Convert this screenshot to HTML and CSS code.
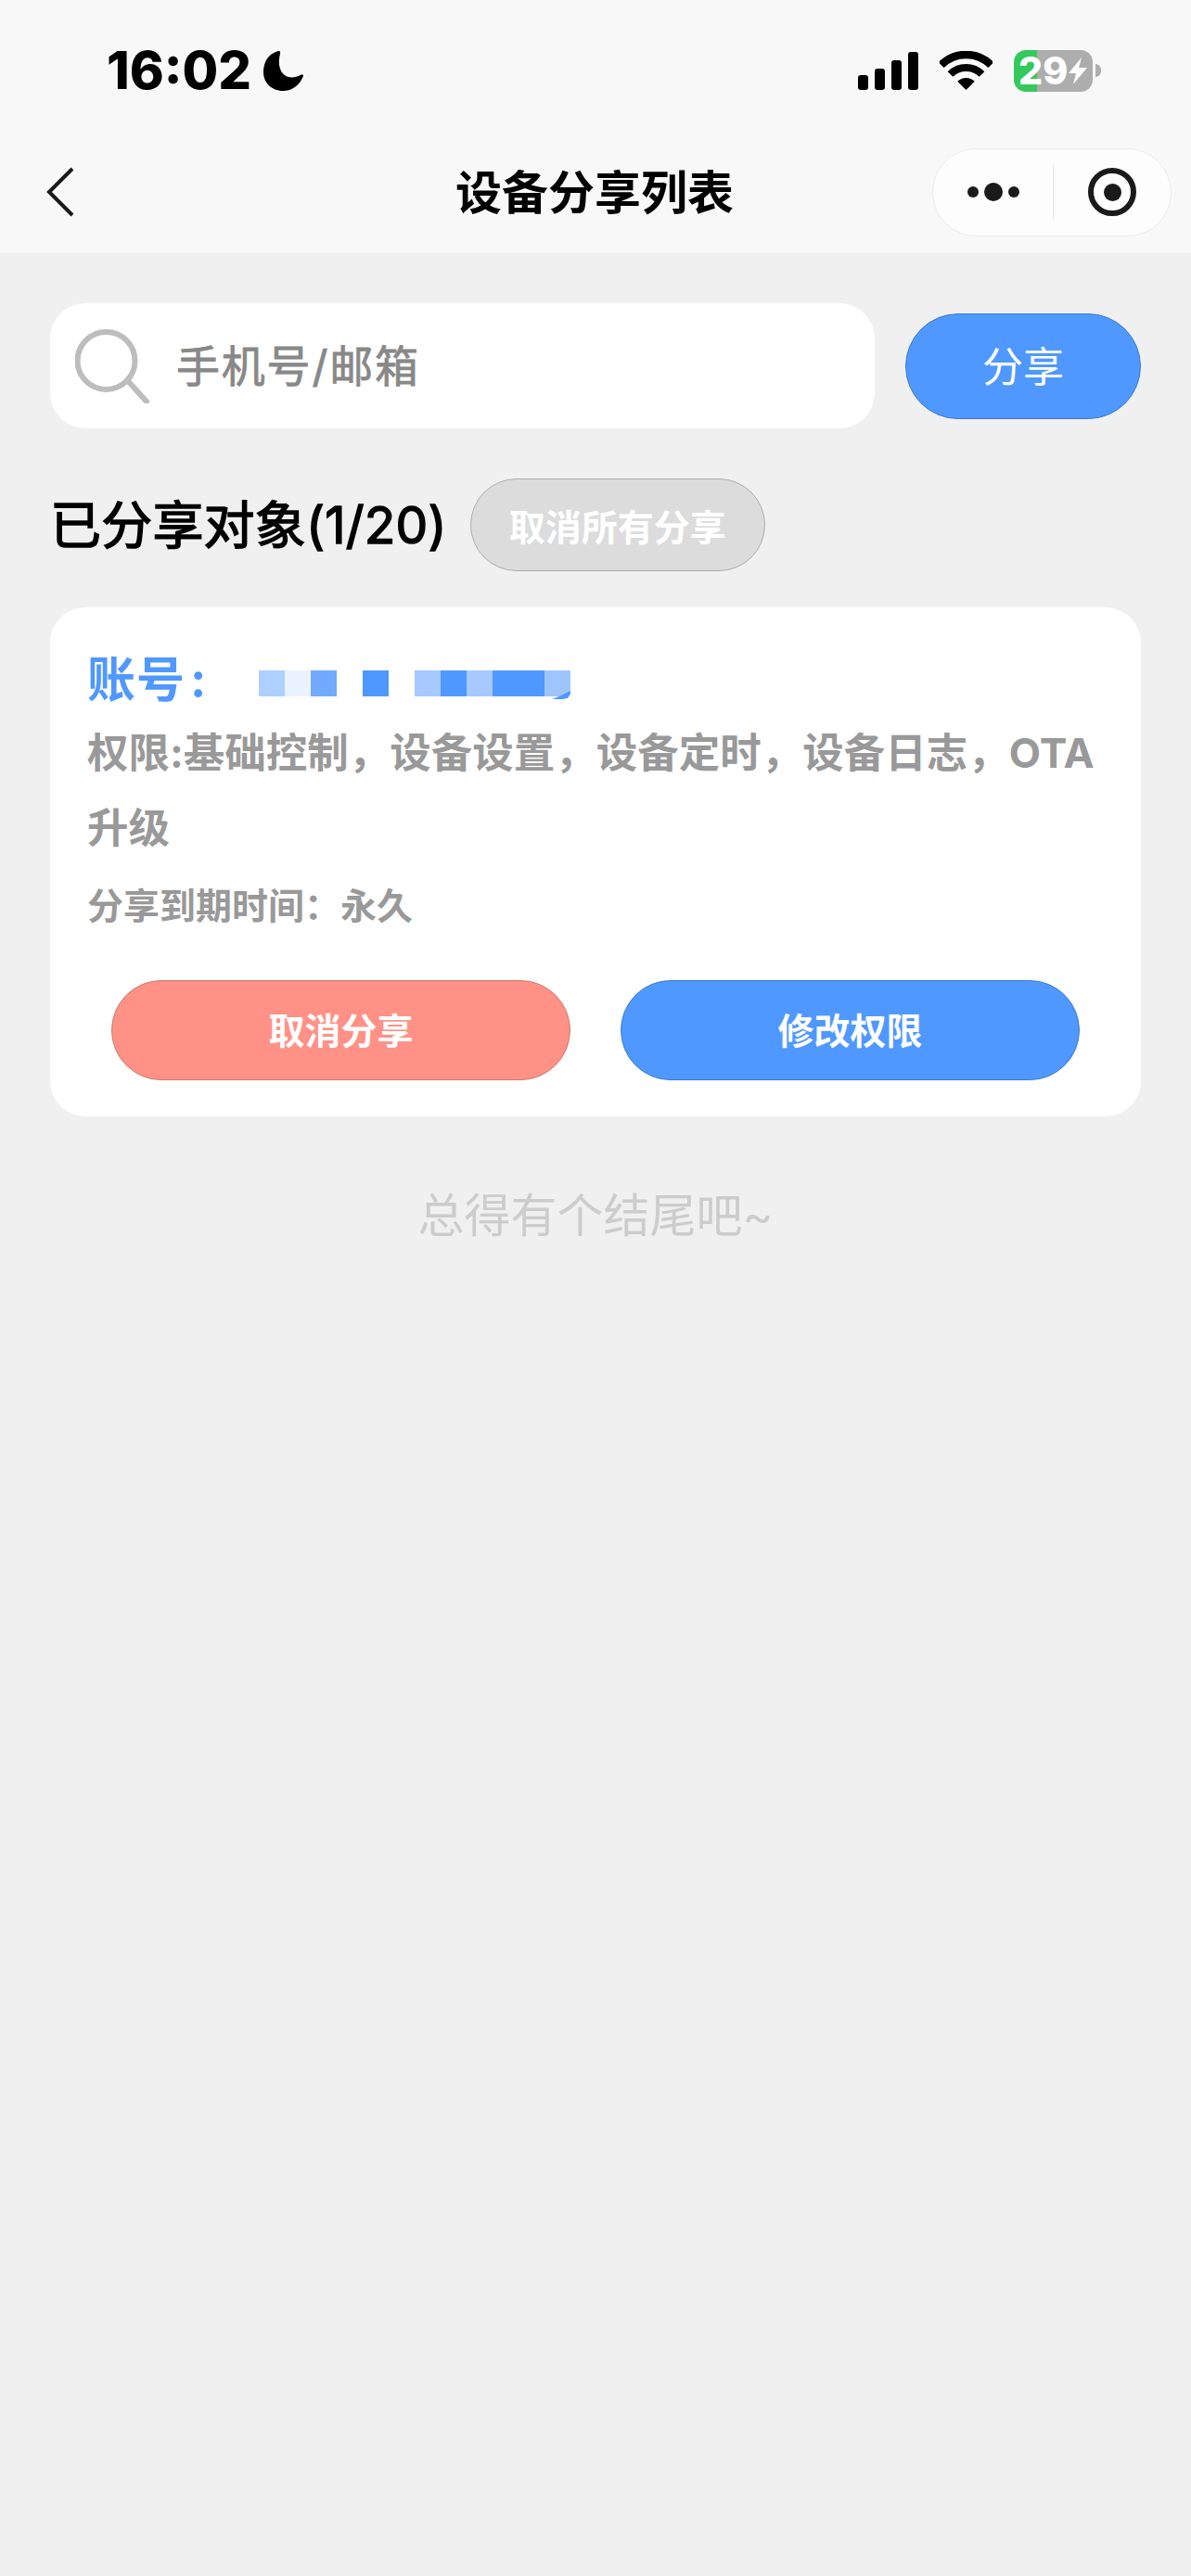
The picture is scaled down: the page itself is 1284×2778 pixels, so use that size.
FILE: index.html
```html
<!DOCTYPE html>
<html lang="zh-CN">
<head>
    <meta charset="UTF-8">
    <meta name="viewport" content="width=device-width, initial-scale=1.0">
    <title>设备分享列表</title>
    <link rel="stylesheet" href="styles.css">
</head>
<body>
    <header class="top">
        <div class="status">
            <div class="status-left">
                <span class="time">16:02</span>
                <svg class="moon" width="43" height="43" viewBox="0 0 43 43"><path d="M16 0C5 3 0 12 0 23C0 34 9 43 21 43C31 43 39 37 43 27C43 25 41 25 40 26C36 28 31 29 27 28C19 26 16 17 17 8C17.5 5 18.5 2 18 1C18 0 17 0 16 0Z"/></svg>
            </div>
            <div class="status-right">
                <div class="signal">
                    <span class="bar bar-1"></span>
                    <span class="bar bar-2"></span>
                    <span class="bar bar-3"></span>
                    <span class="bar bar-4"></span>
                </div>
                <svg class="wifi" width="57" height="42" viewBox="0 0 57 42">
                    <path d="M1.6 15.1A38 38 0 0 1 55.4 15.1" fill="none" stroke="#000" stroke-width="8.5"/>
                    <path d="M11.5 25A24 24 0 0 1 45.5 25" fill="none" stroke="#000" stroke-width="8"/>
                    <path d="M28.5 42L19.3 32.8A13 13 0 0 1 37.7 32.8Z"/>
                </svg>
                <div class="battery">
                    <span class="battery-num">29</span>
                    <svg class="bolt" width="20" height="29" viewBox="0 0 20 29"><path d="M14 0L0 17H8L5 29L20 11H11Z" fill="#fff"/></svg>
                </div>
                <span class="battery-nub"></span>
            </div>
        </div>
        <nav class="nav">
            <svg class="back" width="30" height="54" viewBox="0 0 30 54"><path d="M28 2L3 27L28 52" fill="none" stroke="#1a1a1a" stroke-width="4"/></svg>
            <h1 class="title">设备分享列表</h1>
            <div class="capsule">
                <div class="capsule-more">
                    <span class="dot"></span>
                    <span class="dot dot-big"></span>
                    <span class="dot"></span>
                </div>
                <div class="capsule-close">
                    <span class="target"><span class="target-dot"></span></span>
                </div>
            </div>
        </nav>
    </header>

    <main class="page">
        <div class="search-row">
            <div class="search">
                <svg class="search-icon" width="80" height="80" viewBox="0 0 80 80">
                    <circle cx="33.5" cy="34" r="31" fill="none" stroke="#bdbdbd" stroke-width="6"/>
                    <path d="M57 56L77 78" stroke="#bdbdbd" stroke-width="6" stroke-linecap="round"/>
                </svg>
                <span class="search-text">手机号/邮箱</span>
            </div>
            <button class="share-btn">分享</button>
        </div>

        <div class="heading-row">
            <h2 class="heading">已分享对象(1/20)</h2>
            <button class="cancel-all">取消所有分享</button>
        </div>

        <section class="card">
            <div class="account">
                <span class="account-label">账号<span class="colon">:</span></span>
                <div class="mosaic">
                    <span class="tile t1"></span>
                    <span class="tile t2"></span>
                    <span class="tile t3"></span>
                    <span class="tile"></span>
                    <span class="tile t4"></span>
                    <span class="tile"></span>
                    <span class="tile t5"></span>
                    <span class="tile t4"></span>
                    <span class="tile t5"></span>
                    <span class="tile t4"></span>
                    <span class="tile t4"></span>
                    <span class="tile t6"></span>
                </div>
            </div>
            <p class="perms">权限:基础控制，设备设置，设备定时，设备日志，OTA升级</p>
            <p class="expire">分享到期时间：永久</p>
            <div class="actions">
                <button class="action action-red">取消分享</button>
                <button class="action action-blue">修改权限</button>
            </div>
        </section>

        <p class="end">总得有个结尾吧~</p>
    </main>
</body>
</html>
```

FILE: styles.css
```css
* {
    box-sizing: border-box;
}
body {
    margin: 0;
    min-height: 100vh;
    background-color: #f0f0f0;
    font-family: Inter, "Noto Sans CJK SC", sans-serif;
    color: #000;
}
button {
    font-family: inherit;
    padding: 0;
    color: #fff;
}
h1, h2, p {
    margin: 0;
}

/* top bar */
.top {
    background-color: #f8f8f8;
}
.status {
    height: 152px;
    padding: 0 97px 0 115px;
    display: flex;
    align-items: center;
    justify-content: space-between;
}
.status-left {
    display: flex;
    align-items: center;
    gap: 13px;
}
.time {
    font-size: 56px;
    font-weight: 800;
    line-height: 1;
}
.status-right {
    display: flex;
    align-items: center;
}
.signal {
    display: flex;
    align-items: flex-end;
    gap: 7px;
    margin-right: 23px;
}
.bar {
    width: 11px;
    background: #000;
    border-radius: 3px;
}
.bar-1 { height: 16px; }
.bar-2 { height: 23px; }
.bar-3 { height: 32px; }
.bar-4 { height: 41px; }
.wifi {
    margin-right: 23px;
}
.battery {
    width: 85px;
    height: 45px;
    padding-left: 5px;
    border-radius: 13px;
    background: linear-gradient(to right, #35c95c 0, #35c95c 25px, #adadad 25px);
    display: flex;
    align-items: center;
    gap: 1px;
}
.battery-num {
    font-size: 41px;
    font-weight: 800;
    line-height: 1;
    color: #fff;
}
.battery-nub {
    width: 6px;
    height: 14px;
    margin-left: 3px;
    background: #adadad;
    border-radius: 0 7px 7px 0;
}
.nav {
    height: 121px;
    padding: 0 21px 11px;
    display: grid;
    grid-template-columns: 1fr auto 1fr;
    align-items: center;
}
.back {
    margin-left: 29px;
}
.title {
    font-size: 50px;
    font-weight: 700;
    line-height: 1.2;
    margin-left: -2px;
    padding-top: 2px;
}
.capsule {
    justify-self: end;
    width: 258px;
    height: 95px;
    background: #fdfdfd;
    border: 1px solid #ebebeb;
    border-radius: 48px;
    display: flex;
    align-items: center;
}
.capsule-more {
    width: 129px;
    display: flex;
    align-items: center;
    justify-content: center;
    gap: 6px;
}
.dot {
    width: 12px;
    height: 12px;
    border-radius: 50%;
    background: #1a1a1a;
}
.dot-big {
    width: 20px;
    height: 20px;
}
.capsule-close {
    flex: 1;
    height: 60px;
    border-left: 1px solid #e6e6e6;
    display: flex;
    align-items: center;
    justify-content: center;
}
.target {
    width: 52px;
    height: 52px;
    border: 6px solid #1a1a1a;
    border-radius: 50%;
    display: flex;
    align-items: center;
    justify-content: center;
}
.target-dot {
    width: 19px;
    height: 19px;
    border-radius: 50%;
    background: #1a1a1a;
}

/* page */
.page {
    padding: 54px 54px 0;
}
.search-row {
    display: flex;
    align-items: center;
    gap: 33px;
}
.search {
    flex: 1;
    height: 135px;
    padding-left: 27px;
    background: #fff;
    border-radius: 38px;
    display: flex;
    align-items: center;
    gap: 29px;
}
.search-text {
    font-size: 47px;
    letter-spacing: 1.8px;
    color: #888;
    line-height: 1;
    -webkit-text-stroke: 0.8px #888;
}
.share-btn {
    width: 254px;
    height: 114px;
    padding-bottom: 4px;
    background: #4f98ff;
    border: 1px solid #3f7ad0;
    border-radius: 57px;
    font-size: 44px;
}
.heading-row {
    margin-top: 54px;
    display: flex;
    align-items: center;
    gap: 25px;
}
.heading {
    font-size: 55px;
    font-weight: 400;
    letter-spacing: 0.2px;
    line-height: 1.2;
    -webkit-text-stroke: 1.5px #000;
}
.cancel-all {
    width: 318px;
    height: 100px;
    background: #dcdcdc;
    border: 1px solid #adadad;
    border-radius: 50px;
    font-size: 39px;
    font-weight: 700;
}

/* card */
.card {
    margin-top: 39px;
    padding: 44px 40px 39px;
    background: #fff;
    border-radius: 38px;
}
.account {
    display: flex;
    height: 70px;
    align-items: center;
}
.account-label {
    width: 185px;
    font-size: 52px;
    font-weight: 700;
    letter-spacing: 1px;
    line-height: 70px;
    color: #4f98ff;
}
.colon {
    margin-left: 5px;
}
.mosaic {
    display: flex;
    margin-top: 6px;
}
.tile {
    position: relative;
    width: 28px;
    height: 28px;
}
.t1 { background: #add0ff; }
.t2 { background: #eaf2ff; }
.t3 { background: #72aaff; }
.t4 { background: #4f98ff; }
.t5 { background: #a6c9ff; }
.t6 {
    background: #9fc5ff;
    border-bottom-right-radius: 8px;
}
.t6::after {
    content: "";
    position: absolute;
    right: 0;
    bottom: -3px;
    width: 20px;
    height: 9px;
    background: #4f98ff;
    clip-path: polygon(100% 0, 100% 40%, 85% 85%, 60% 100%, 0 100%, 45% 60%);
}
.perms {
    margin-top: 3px;
    margin-right: -12px;
    font-size: 44.5px;
    font-weight: 700;
    line-height: 81px;
    color: #999;
}
.expire {
    margin-top: 18px;
    font-size: 39px;
    font-weight: 700;
    line-height: 50px;
    color: #999;
}
.actions {
    margin-top: 55px;
    padding: 0 26px;
    display: flex;
    gap: 54px;
}
.action {
    flex: 1;
    height: 108px;
    padding-bottom: 5px;
    border-radius: 54px;
    font-size: 39px;
    font-weight: 700;
}
.action-red {
    background: #ff9186;
    border: 1px solid #c97a70;
}
.action-blue {
    background: #4f98ff;
    border: 1px solid #3f7ad0;
}
.end {
    margin-top: 72px;
    font-size: 50px;
    line-height: 70px;
    text-align: center;
    color: #ccc;
}
```
